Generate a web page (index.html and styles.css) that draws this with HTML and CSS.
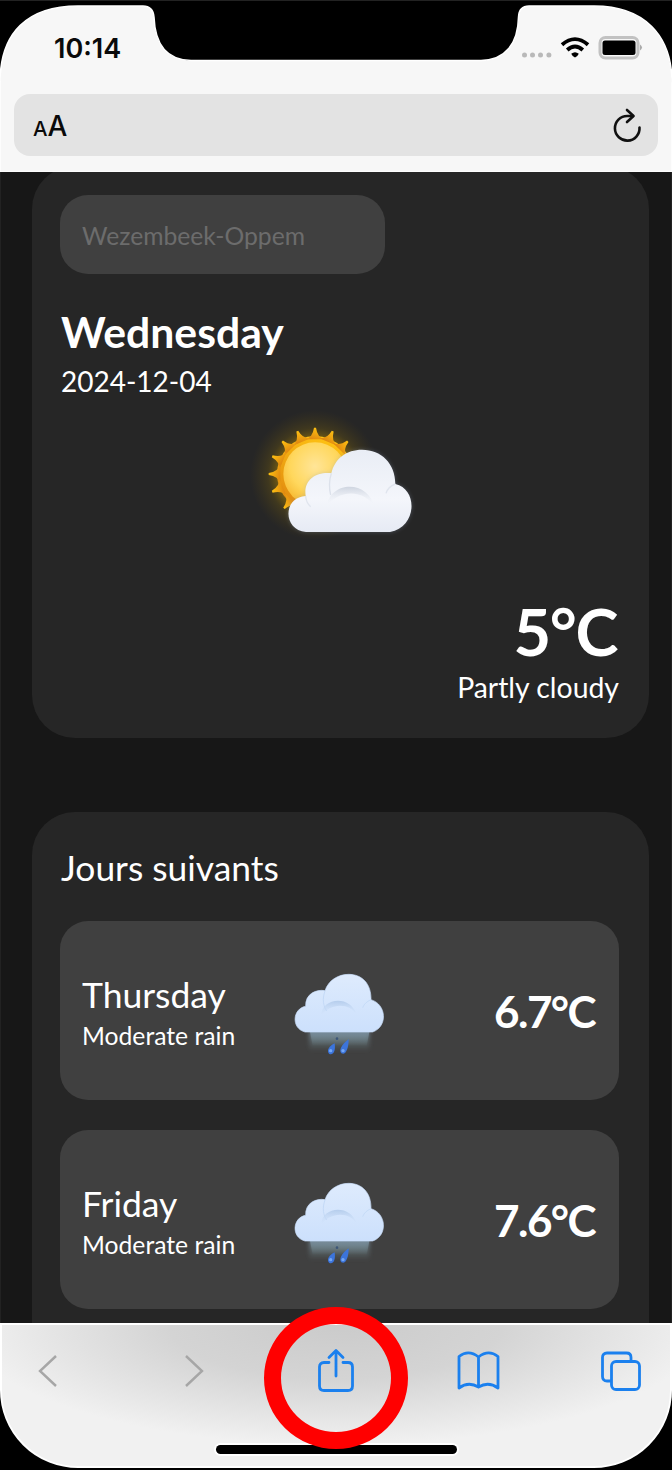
FILE: index.html
```html
<!DOCTYPE html>
<html lang="fr">
<head>
<meta charset="utf-8">
<title>Météo</title>
<link rel="stylesheet" href="styles.css">
</head>
<body>
<svg class="defs" aria-hidden="true">
  <defs>
    <radialGradient id="glow"><stop offset=".5" stop-color="#d09c00" stop-opacity=".6"/><stop offset=".72" stop-color="#a88200" stop-opacity=".2"/><stop offset="1" stop-color="#806000" stop-opacity="0"/></radialGradient>
    <linearGradient id="rays" x1=".7" y1="0" x2=".2" y2="1"><stop offset="0" stop-color="#ffc412"/><stop offset="1" stop-color="#df8610"/></linearGradient>
    <radialGradient id="disc" cx=".5" cy=".38" r=".65"><stop offset="0" stop-color="#ffe598"/><stop offset=".6" stop-color="#ffd75c"/><stop offset="1" stop-color="#f6b62c"/></radialGradient>
    <linearGradient id="cloud" x1="0" y1="0" x2="0" y2="1"><stop offset="0" stop-color="#e9edf5"/><stop offset=".6" stop-color="#f4f6fb"/><stop offset="1" stop-color="#e6eaf4"/></linearGradient>
    <linearGradient id="arch" x1="0" y1="0" x2="0" y2="1"><stop offset="0" stop-color="#cfd5e0"/><stop offset=".8" stop-color="#eef1f8" stop-opacity="0"/></linearGradient>
    <linearGradient id="wet" x1="0" y1="0" x2="0" y2="1"><stop offset="0" stop-color="#deebfd"/><stop offset="1" stop-color="#cce0fc"/></linearGradient>
    <linearGradient id="mist" x1="0" y1="0" x2="0" y2="1"><stop offset="0" stop-color="#788c9c"/><stop offset="1" stop-color="#6f8789" stop-opacity="0"/></linearGradient>
    <linearGradient id="wetarch" x1="0" y1="0" x2="0" y2="1"><stop offset="0" stop-color="#b5cdec"/><stop offset="1" stop-color="#cfe1fa" stop-opacity="0"/></linearGradient>
    <filter id="soft" x="-20%" y="-20%" width="140%" height="140%"><feGaussianBlur stdDeviation="7"/></filter>
    <path id="ray" d="M196 118Q218 112 222 83H228Q232 112 254 118Z"/>
    <symbol id="rain" viewBox="0 0 420 360">
      <rect x="118" y="238" width="180" height="62" fill="url(#mist)" filter="url(#soft)"/>
      <path d="M120 242H298L290 285H128Z" fill="url(#mist)"/>
      <path d="M105 243C62 232 68 172 107 166C105 129 138 114 165 119C175 88 205 70 236 70C276 70 304 98 303 146C350 160 354 227 308 243Z" fill="url(#wet)" stroke="#c9defa" stroke-width="2"/>
      <path d="M165 120C156 145 160 165 170 180" fill="none" stroke="#c4daf7" stroke-width="3"/>
      <path d="M153 195C156 137 244 133 260 192C239 155 181 155 153 195Z" fill="url(#wetarch)"/>
      <path d="M303 146Q284 154 278 170" fill="none" stroke="#c6dcf8" stroke-width="3"/>
      <path d="M194 277C178 284 169 299 177 308C187 315 198 304 194 277ZM236 265C214 281 206 299 214 307C227 314 236 294 236 265Z" fill="#3c74da"/>
      <circle cx="182" cy="299" r="5" fill="#72a7f7"/><circle cx="219" cy="299" r="5" fill="#72a7f7"/><circle cx="201" cy="263" r="4" fill="#3d5678"/>
    </symbol>
  </defs>
</svg>
<div class="phone">
  <header class="top">
    <svg class="shape" viewBox="0 0 672 172">
      <path d="M0 172V83C0 32 28 6 78 6H143Q153 6 154 17C155 44 167 60 191 60.500H481C506 60 518 43 518.500 17Q519 6 529 6H594C644 6 672 35 672 83V172Z" fill="#f7f7f7" stroke="#fff" stroke-width="1.500"/>
    </svg>
    <div class="status">
      <span class="clock">10:14</span>
      <svg class="indicators" width="122" height="26" viewBox="0 0 122 26">
        <g fill="#b9b9b9"><circle cx="3.500" cy="20" r="2.500"/><circle cx="11.500" cy="20" r="2.500"/><circle cx="19.500" cy="20" r="2.500"/><circle cx="27.900" cy="20" r="2.500"/></g>
        <g fill="none" stroke="#000" stroke-width="3.800"><path d="M41 9.700Q54 -1.500 67 9.700"/><path d="M46.200 15Q54 8 61.800 15"/></g>
        <path d="M50.200 18.800Q54 15.500 57.800 18.800Q57 21 54 22.500Q51 21 50.200 18.800Z"/>
        <rect x="79" y="2.500" width="38" height="20.500" rx="5.500" fill="#f7f7f7" stroke="#c2c2c2" stroke-width="3"/>
        <rect x="81.500" y="5.500" width="33" height="14.500" rx="2.500"/>
        <path d="M119 9.500Q123 12.500 119 15.500Z" fill="#aaa"/>
      </svg>
    </div>
    <div class="address">
      <span class="reader"><small>A</small>A</span>
      <svg width="32" height="36" viewBox="0 0 32 36" fill="none" stroke="#111" stroke-width="2.600" stroke-linecap="round" stroke-linejoin="round">
        <path d="M26.500 19.500A12.300 12.300 0 1 1 14.200 8H20"/><path d="M14 2L20.500 8L14 14"/>
      </svg>
    </div>
  </header>
  <main class="page">
    <section class="card today">
      <input class="city" type="text" placeholder="Wezembeek-Oppem" aria-label="Ville">
      <h1 class="day">Wednesday</h1>
      <p class="date">2024-12-04</p>
      <svg class="sky" width="200" height="160" viewBox="0 0 600 480">
        <circle cx="225" cy="225" r="195" fill="url(#glow)"/>
        <g fill="url(#rays)">
          <circle cx="225" cy="222" r="114"/>
          <use href="#ray"/><use href="#ray" transform="rotate(22.500 225 222)"/><use href="#ray" transform="rotate(45 225 222)"/>
          <use href="#ray" transform="rotate(-22.500 225 222)"/><use href="#ray" transform="rotate(-45 225 222)"/><use href="#ray" transform="rotate(-67.500 225 222)"/>
          <use href="#ray" transform="rotate(-90 225 222)"/><use href="#ray" transform="rotate(-112.500 225 222)"/><use href="#ray" transform="rotate(-138 225 222)"/>
        </g>
        <circle cx="225" cy="222" r="95" fill="url(#disc)"/>
        <path d="M198 396C128 390 128 292 197 288C190 240 228 215 274 220C284 175 320 149 366 149C424 149 466 190 466 252C536 268 530 383 450 396Z" fill="#8f9cb5" opacity=".35" filter="url(#soft)"/>
        <path d="M198 396C128 390 128 292 197 288C190 240 228 215 274 220C284 175 320 149 366 149C424 149 466 190 466 252C536 268 530 383 450 396Z" fill="url(#cloud)"/>
        <path d="M274 220C266 245 268 268 272 285" fill="none" stroke="#dce1eb" stroke-width="4"/>
        <path d="M259 325C267 240 389 238 404 326C380 266 287 266 259 325Z" fill="url(#arch)"/>
        <path d="M197 288Q198 308 212 320M466 252Q444 260 438 280" fill="none" stroke="#e0e5ee" stroke-width="4"/>
      </svg>
      <p class="temp">5°C</p>
      <p class="desc">Partly cloudy</p>
    </section>
    <section class="card next">
      <h2 class="heading">Jours suivants</h2>
      <ul class="days">
        <li class="row">
          <div class="label"><span class="name">Thursday</span><span class="note">Moderate rain</span></div>
          <svg class="rain" width="140" height="120"><use href="#rain"/></svg>
          <strong class="degrees">6.7°C</strong>
        </li>
        <li class="row">
          <div class="label"><span class="name">Friday</span><span class="note">Moderate rain</span></div>
          <svg class="rain" width="140" height="120"><use href="#rain"/></svg>
          <strong class="degrees">7.6°C</strong>
        </li>
      </ul>
    </section>
  </main>
  <footer class="bottom">
    <nav class="tools">
      <svg width="44" height="34" viewBox="-11 0 44 34" fill="none" stroke="#a6a6a6" stroke-width="2.400"><path d="M19 2L3 17L19 32"/></svg>
      <svg width="44" height="34" viewBox="-14 0 44 34" fill="none" stroke="#a6a6a6" stroke-width="2.400"><path d="M3 2L19 17L3 32"/></svg>
      <span class="share">
        <svg width="44" height="46" viewBox="-4 0 44 46" fill="none" stroke="#1b80ee" stroke-width="2.800" stroke-linecap="round" stroke-linejoin="round"><path d="M12 14.500H7Q2.500 14.500 2.500 19V38Q2.500 42.500 7 42.500H31Q35.500 42.500 35.500 38V19Q35.500 14.500 31 14.500H26M19 28V3M12 9.500L19 2.500L26 9.500"/></svg>
      </span>
      <svg width="44" height="40" viewBox="-.5 0 44 40" fill="none" stroke="#1b80ee" stroke-width="2.800" stroke-linejoin="round"><path d="M22 6Q12 -2 2.500 5.500V37Q12 30 22 36Q32 30 41.500 37V5.500Q32 -2 22 6V36"/></svg>
      <svg width="44" height="42" viewBox="-1 0 44 42" fill="none" stroke="#1b80ee" stroke-width="2.800"><path d="M11 31H7Q2.500 31 2.500 26.500V7.500Q2.500 3 7 3H26.500Q31 3 31 7.500V11"/><rect x="11.500" y="11.500" width="28" height="28" rx="4.500"/></svg>
    </nav>
    <div class="home"></div>
  </footer>
</div>
</body>
</html>
```
FILE: styles.css
```css
*, *::after { box-sizing: border-box; }
body { margin: 0; background: #000; }
h1, h2, p, ul { margin: 0; padding: 0; }
ul { list-style: none; }
svg { display: block; flex: none; }
.defs { position: absolute; width: 0; height: 0; }
.phone {
  width: 672px;
  height: 1470px;
  display: flex;
  flex-direction: column;
  overflow: hidden;
  background: #000;
  color: #fff;
  font-family: Lato, "Noto Sans", sans-serif;
}
.top {
  position: relative;
  height: 172px;
  flex: none;
  padding: 34px 14px 0;
  border-top: 1px solid #222;
  color: #0a0a0a;
  font-family: Inter, "Liberation Sans", sans-serif;
}
.shape { position: absolute; left: 0; top: -1px; width: 672px; height: 172px; }
.status, .address { position: relative; display: flex; justify-content: space-between; }
.status { padding: 0 15px 0 40px; height: 59px; }
.clock { font-size: 27px; line-height: 28px; font-weight: 600; }
.address {
  align-items: center;
  height: 62px;
  padding: 2px 13px 0 19px;
  border-radius: 16px;
  background: #e3e3e3;
}
.reader { padding-top: 2px; font-size: 28px; line-height: 34px; font-weight: 500; }
.reader small { font-size: 20.5px; }

.page {
  height: 1151px;
  flex: none;
  display: flex;
  flex-direction: column;
  gap: 74px;
  padding: 0 22px 0 31px;
  overflow: hidden;
  background: #171717;
  border: solid #222;
  border-width: 0 1px;
}
.card {
  flex: none;
  display: flex;
  flex-direction: column;
  padding: 29px 30px 0 28px;
  border-radius: 43px;
  background: #262626;
}
.today { height: 572px; margin-top: -6px; }
.next { height: 620px; }
.city {
  width: 325px;
  height: 79px;
  margin-bottom: 32px;
  padding: 2px 22px 0;
  border: 0;
  border-radius: 28px;
  background: #404040;
  color: #fff;
  font: 24.7px/30px Lato, sans-serif;
}
.city::placeholder { color: #6c6c6c; opacity: 1; }
.day { padding-left: 1px; font-size: 42.7px; line-height: 52px; font-weight: 700; }
.date { margin-top: 6px; padding-left: 1px; font-size: 28px; line-height: 34px; }
.sky { align-self: center; margin: 2px 0 32px; }
.temp { padding-right: 2px; font-size: 65px; line-height: 78px; font-weight: 700; letter-spacing: -1.4px; text-align: right; }
.desc { font-size: 28.4px; line-height: 34px; text-align: right; }
.heading { margin-top: 5px; padding-left: 1px; font-size: 35.4px; line-height: 43px; font-weight: 400; }
.days { display: flex; flex-direction: column; gap: 30px; margin-top: 32px; }
.row {
  height: 179px;
  display: grid;
  grid-template-columns: 1fr 140px 1fr;
  align-items: center;
  padding: 0 22px;
  border-radius: 28px;
  background: #404040;
}
.label { display: flex; flex-direction: column; gap: 5px; padding-top: 2px; }
.name { font-size: 35.5px; line-height: 43px; }
.note { font-size: 24.7px; line-height: 30px; }
.degrees { padding: 1px 2px 0 0; font-size: 44px; line-height: 53px; letter-spacing: -1.6px; text-align: right; }

.bottom {
  height: 145px;
  flex: none;
  display: flex;
  flex-direction: column;
  align-items: center;
  border: 2px solid #fff;
  border-radius: 0 0 78px 78px;
  background: radial-gradient(ellipse 370px 120px at 50% 0, #cbcbcb 0, #d4d4d4 45%, #f1f1f1 100%);
}
.tools {
  width: 100%;
  height: 106px;
  display: flex;
  align-items: center;
  justify-content: space-between;
  padding: 0 27px 15px 24px;
}
.share {
  position: relative;
  display: flex;
}
.share::after {
  content: "";
  position: absolute;
  left: -49px;
  top: -41px;
  width: 144px;
  height: 142px;
  border: 17px solid #f00;
  border-radius: 50%;
  z-index: 1;
}
.home {
  width: 241px;
  height: 9px;
  margin-top: 14px;
  border-radius: 5px;
  background: #000;
  box-shadow: 0 0 0 2px #fff;
}
```
